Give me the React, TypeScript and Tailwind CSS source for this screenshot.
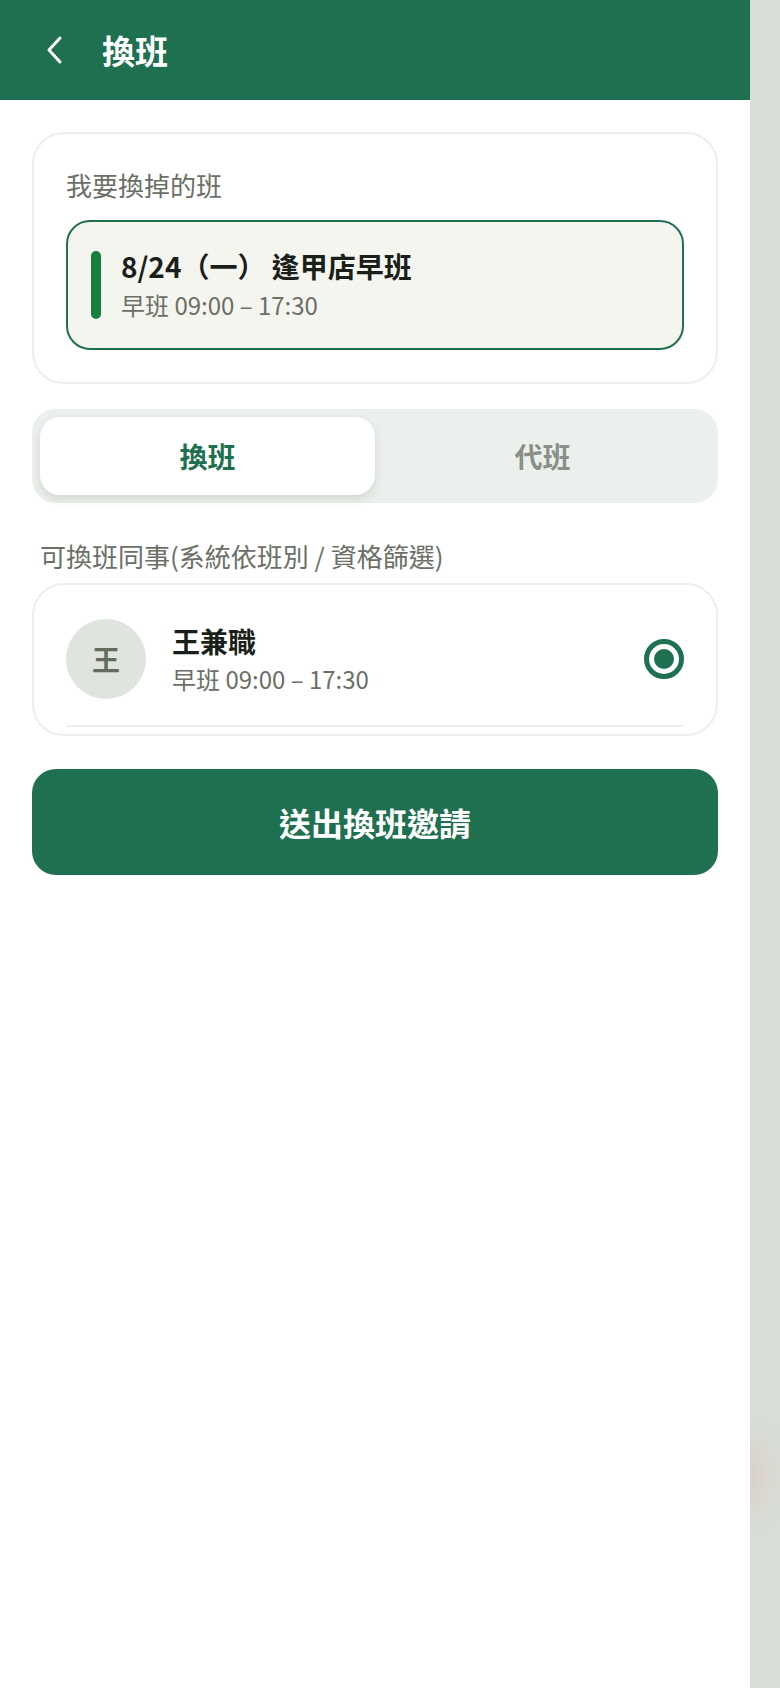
import React from "react";

const font = { fontFamily: '"Noto Sans CJK TC", "Noto Sans", sans-serif' };

export default function App() {
  return (
    <div className="flex w-[780px] min-h-[1688px]" style={font}>
      <div className="w-[750px] min-h-[1688px] bg-white">
        <header className="h-[100px] bg-[#1f7050] flex items-center pl-[40px]">
          <svg width="28" height="32" viewBox="0 0 28 32" fill="none" className="shrink-0">
            <path d="M20 4 L9 16 L20 28" stroke="white" strokeWidth="3" strokeLinecap="round" strokeLinejoin="round" />
          </svg>
          <h1 className="ml-[34px] text-[33px] leading-[40px] font-bold text-white">換班</h1>
        </header>

        <main className="px-8 pt-8">
          <section className="border-2 border-[#eeeeee] rounded-[32px] px-8 pt-[33px] pb-[32px]">
            <div className="text-[26px] leading-[36px] text-[#6b6f66]">我要換掉的班</div>
            <div className="mt-[17px] h-[130px] border-2 border-[#1f7050] rounded-[24px] bg-[#f5f5f0] flex items-center pl-[23px] gap-[20px]">
              <div className="w-[10px] h-[68px] rounded-full bg-[#13803f]" />
              <div className="flex flex-col -mt-[2px]">
                <div className="text-[28px] leading-[36px] font-bold text-[#1a1f1a]">8/24（一） 逢甲店早班</div>
                <div className="text-[24px] leading-[32px] text-[#6b6f66] mt-[5px]">早班 09:00 – 17:30</div>
              </div>
            </div>
          </section>

          <div className="mt-[25px] h-[94px] rounded-[24px] bg-[#ecf0ec] p-2 flex">
            <div className="flex-1 rounded-[20px] bg-white shadow-[0_4px_10px_rgba(0,40,20,0.12)] flex items-center justify-center text-[28px] font-bold text-[#1f7050]">換班</div>
            <div className="flex-1 flex items-center justify-center text-[28px] font-bold text-[#8a8f88]">代班</div>
          </div>

          <div className="mt-[35px] px-2 text-[26px] leading-[36px] text-[#6b6f66]">可換班同事(系統依班別 / 資格篩選)</div>

          <section className="mt-[9px] border-2 border-[#eeeeee] rounded-[32px] px-8 pb-[7px]">
            <div className="flex items-center pt-[34px] pb-[26px] border-b-2 border-[#eeeeee]">
              <div className="w-[80px] h-[80px] rounded-full bg-[#e0e4de] flex items-center justify-center text-[28px] font-bold text-[#656b5f] shrink-0">王</div>
              <div className="ml-[26px] flex flex-col flex-1">
                <div className="text-[28px] leading-[36px] font-bold text-[#1a1f1a]">王兼職</div>
                <div className="text-[24px] leading-[32px] text-[#6b6f66] mt-[4px]">早班 09:00 – 17:30</div>
              </div>
              <div className="w-[40px] h-[40px] rounded-full border-[5px] border-[#1f7050] flex items-center justify-center shrink-0">
                <div className="w-[20px] h-[20px] rounded-full bg-[#1f7050]" />
              </div>
            </div>
          </section>

          <button className="mt-[33px] w-full h-[106px] rounded-[24px] bg-[#1f7050] text-white text-[32px] font-bold flex items-center justify-center">送出換班邀請</button>
        </main>
      </div>
      <div className="relative w-[30px] bg-[#d8ddd6] overflow-hidden">
        <div className="absolute left-[-30px] top-[1440px] w-[44px] h-[70px] rounded-full bg-[#e0b8ae] opacity-35 blur-[12px]" />
      </div>
    </div>
  );
}
